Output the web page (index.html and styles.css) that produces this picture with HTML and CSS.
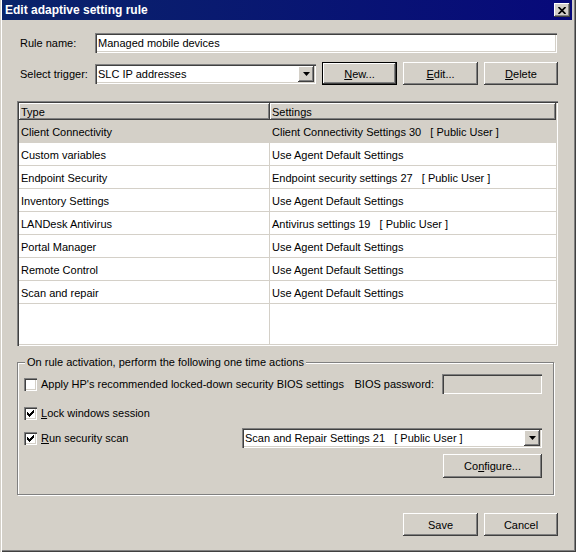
FILE: index.html
```html
<!DOCTYPE html>
<html>
<head>
<meta charset="utf-8">
<link rel="stylesheet" href="styles.css">
</head>
<body>
<div class="window">
  <div class="titlebar">
    <span class="title">Edit adaptive setting rule</span>
    <div class="close">
      <svg width="8" height="7" viewBox="0 0 8 7"><path d="M0.5 0 L7.5 7 M7.5 0 L0.5 7" stroke="#000" stroke-width="1.7" fill="none"/></svg>
    </div>
  </div>
  <div class="content">
    <div class="row row-name">
      <span class="lbl">Rule name:</span>
      <div class="textbox name-box">Managed mobile devices</div>
    </div>
    <div class="row row-trigger">
      <span class="lbl">Select trigger:</span>
      <div class="textbox combo trigger">
        <span class="combo-text">SLC IP addresses</span>
        <span class="dd"><svg width="7" height="4" viewBox="0 0 7 4"><polygon points="0,0 7,0 3.5,4" fill="#000"/></svg></span>
      </div>
      <div class="btn default"><span><u>N</u>ew...</span></div>
      <div class="btn"><span><u>E</u>dit...</span></div>
      <div class="btn narrow"><span><u>D</u>elete</span></div>
    </div>

    <div class="list">
      <div class="lhead">
        <div class="hcell h1">Type</div>
        <div class="hcell h2">Settings</div>
      </div>
      <div class="lbody">
        <div class="lrow sel"><div class="c1">Client Connectivity</div><div class="c2">Client Connectivity Settings 30&nbsp;&nbsp; [ Public User ]</div></div>
        <div class="lrow"><div class="c1">Custom variables</div><div class="c2">Use Agent Default Settings</div></div>
        <div class="lrow"><div class="c1">Endpoint Security</div><div class="c2">Endpoint security settings 27&nbsp;&nbsp; [ Public User ]</div></div>
        <div class="lrow"><div class="c1">Inventory Settings</div><div class="c2">Use Agent Default Settings</div></div>
        <div class="lrow"><div class="c1">LANDesk Antivirus</div><div class="c2">Antivirus settings 19&nbsp;&nbsp; [ Public User ]</div></div>
        <div class="lrow"><div class="c1">Portal Manager</div><div class="c2">Use Agent Default Settings</div></div>
        <div class="lrow"><div class="c1">Remote Control</div><div class="c2">Use Agent Default Settings</div></div>
        <div class="lrow"><div class="c1">Scan and repair</div><div class="c2">Use Agent Default Settings</div></div>
      </div>
    </div>

    <div class="group">
      <div class="legend">On rule activation, perform the following one time actions</div>
      <div class="grow grow-a">
        <span class="check"></span>
        <span class="clabel">Apply HP's recommended locked-down security BIOS settings</span>
        <span class="bios-lbl">BIOS password:</span>
        <div class="textbox disabled bios-box"></div>
      </div>
      <div class="grow grow-b">
        <span class="check on"><svg width="7" height="7" viewBox="0 0 7 7"><path d="M0 2h1v1h1v1h1v-1h1v-1h1v-1h1v-1h1v3h-1v1h-1v1h-1v1h-1v1h-1v-1h-1v-1h-1z" fill="#000"/></svg></span>
        <span class="clabel"><u>L</u>ock windows session</span>
      </div>
      <div class="grow grow-c">
        <span class="check on"><svg width="7" height="7" viewBox="0 0 7 7"><path d="M0 2h1v1h1v1h1v-1h1v-1h1v-1h1v-1h1v3h-1v1h-1v1h-1v1h-1v1h-1v-1h-1v-1h-1z" fill="#000"/></svg></span>
        <span class="clabel"><u>R</u>un security scan</span>
        <div class="textbox combo scan">
          <span class="combo-text">Scan and Repair Settings 21&nbsp;&nbsp; [ Public User ]</span>
          <span class="dd"><svg width="7" height="4" viewBox="0 0 7 4"><polygon points="0,0 7,0 3.5,4" fill="#000"/></svg></span>
        </div>
      </div>
      <div class="grow grow-d">
        <div class="btn configure"><span>Co<u>n</u>figure...</span></div>
      </div>
    </div>

    <div class="footer">
      <div class="btn"><span>Save</span></div>
      <div class="btn narrow"><span>Cancel</span></div>
    </div>
  </div>
</div>
</body>
</html>
```

FILE: styles.css
```css
html, body {
  margin: 0;
  padding: 0;
}
body {
  font-family: "Liberation Sans", Arial, sans-serif;
  font-size: 11px;
  color: #000;
  background: #d4d0c8;
}
.window {
  width: 576px;
  height: 552px;
  box-sizing: border-box;
  background: #d4d0c8;
  padding: 0 4px 4px 2px;
  box-shadow: inset 1px 0 #d4d0c8, inset 2px 0 #fff, inset -1px -1px #404040, inset -2px -2px #808080;
  display: flex;
  flex-direction: column;
}
.titlebar {
  height: 20px;
  flex: none;
  background: linear-gradient(to right, #0a246a, #07097a);
  display: flex;
  align-items: center;
  justify-content: space-between;
}
.title {
  color: #fff;
  font-weight: bold;
  font-size: 12px;
  padding-left: 3px;
}
.close {
  width: 16px;
  height: 14px;
  margin-right: 2px;
  background: #d4d0c8;
  box-shadow: inset -1px -1px #404040, inset 1px 1px #fff, inset -2px -2px #808080;
  display: flex;
  align-items: center;
  justify-content: center;
}
.close svg { display: block; }

.content {
  flex: 1;
  padding: 0 14px 0 15px;
  display: flex;
  flex-direction: column;
}
.row {
  display: flex;
  align-items: center;
}
.lbl {
  width: 75px;
  padding-left: 3px;
  flex: none;
  white-space: nowrap;
}
.row-name {
  margin-top: 13px;
  height: 20px;
}
.row-trigger {
  margin-top: 9px;
  height: 23px;
}

.textbox {
  height: 20px;
  box-sizing: border-box;
  background: #fff;
  box-shadow: inset 1px 1px #808080, inset 2px 2px #404040, inset -1px -1px #fff, inset -2px -2px #d4d0c8;
  padding: 0 3px;
  display: flex;
  align-items: center;
  white-space: nowrap;
  flex: none;
}
.textbox.disabled { background: #d4d0c8; }
.name-box { width: 462px; }

.combo { padding-right: 2px; }
.combo-text { flex: 1; overflow: hidden; }
.dd {
  width: 16px;
  height: 16px;
  flex: none;
  background: #d4d0c8;
  box-shadow: inset -1px -1px #404040, inset 1px 1px #fff, inset -2px -2px #808080;
  display: flex;
  align-items: center;
  justify-content: center;
}
.dd svg { display: block; }
.trigger {
  width: 221px;
  margin-right: 6px;
}

.btn {
  width: 75px;
  height: 23px;
  box-sizing: border-box;
  background: #d4d0c8;
  box-shadow: inset -1px -1px #404040, inset 1px 1px #fff, inset -2px -2px #808080;
  display: flex;
  align-items: center;
  justify-content: center;
  flex: none;
  white-space: nowrap;
}
.btn + .btn { margin-left: 6px; }
.btn.narrow { width: 74px; }
.btn.default { border: 1px solid #000; }

.list {
  margin-top: 16px;
  height: 245px;
  flex: none;
  box-sizing: border-box;
  padding: 2px;
  background: #fff;
  box-shadow: inset 1px 1px #808080, inset 2px 2px #404040, inset -1px -1px #fff, inset -2px -2px #d4d0c8;
  display: flex;
  flex-direction: column;
}
.lhead {
  height: 17px;
  display: flex;
  flex: none;
}
.hcell {
  height: 17px;
  box-sizing: border-box;
  background: #d4d0c8;
  box-shadow: inset -1px -1px #404040, inset 1px 1px #fff, inset -2px -2px #808080;
  padding-left: 2px;
  display: flex;
  align-items: center;
}
.h1 { width: 251px; }
.h2 { flex: 1; padding-left: 2px; }
.lbody {
  flex: 1;
  background: linear-gradient(to right, transparent 250px, #d4d0c8 250px, #d4d0c8 251px, transparent 251px), #fff;
}
.lrow {
  height: 23px;
  box-sizing: border-box;
  border-bottom: 1px solid #d4d0c8;
  padding-top: 1px;
  display: flex;
  align-items: center;
  white-space: nowrap;
}
.lrow.sel { background: #d4d0c8; }
.c1 {
  width: 250px;
  padding-left: 2px;
  box-sizing: border-box;
}
.c2 { padding-left: 3px; }

.group {
  margin-top: 16px;
  margin-right: 4px;
  height: 133px;
  flex: none;
  box-sizing: border-box;
  border: 1px solid #808080;
  box-shadow: 1px 1px #fff, inset 1px 1px #fff;
  padding: 0 11px 0 6px;
  display: flex;
  flex-direction: column;
}
.legend {
  margin: -7px 0 0 1px;
  padding: 0 2px;
  line-height: 13px;
  background: #d4d0c8;
  align-self: flex-start;
}
.grow {
  display: flex;
  align-items: center;
  white-space: nowrap;
}
.grow-a { margin-top: 5px; height: 20px; }
.grow-b { margin-top: 9px; height: 20px; }
.grow-c { margin-top: 5px; height: 20px; }
.grow-d { margin-top: 6px; height: 24px; justify-content: flex-end; }

.check {
  width: 13px;
  height: 13px;
  flex: none;
  box-sizing: border-box;
  background: #fff;
  box-shadow: inset 1px 1px #808080, inset 2px 2px #404040, inset -1px -1px #fff, inset -2px -2px #d4d0c8;
  display: flex;
  align-items: center;
  justify-content: center;
}
.check svg { display: block; shape-rendering: crispEdges; }
.clabel { margin-left: 4px; }
.bios-lbl { margin-left: auto; }
.bios-box { width: 100px; margin-left: 8px; }
.scan { width: 300px; margin-left: auto; }
.configure { width: 99px; height: 24px; }

.footer {
  margin-top: 18px;
  display: flex;
  justify-content: flex-end;
}
```
